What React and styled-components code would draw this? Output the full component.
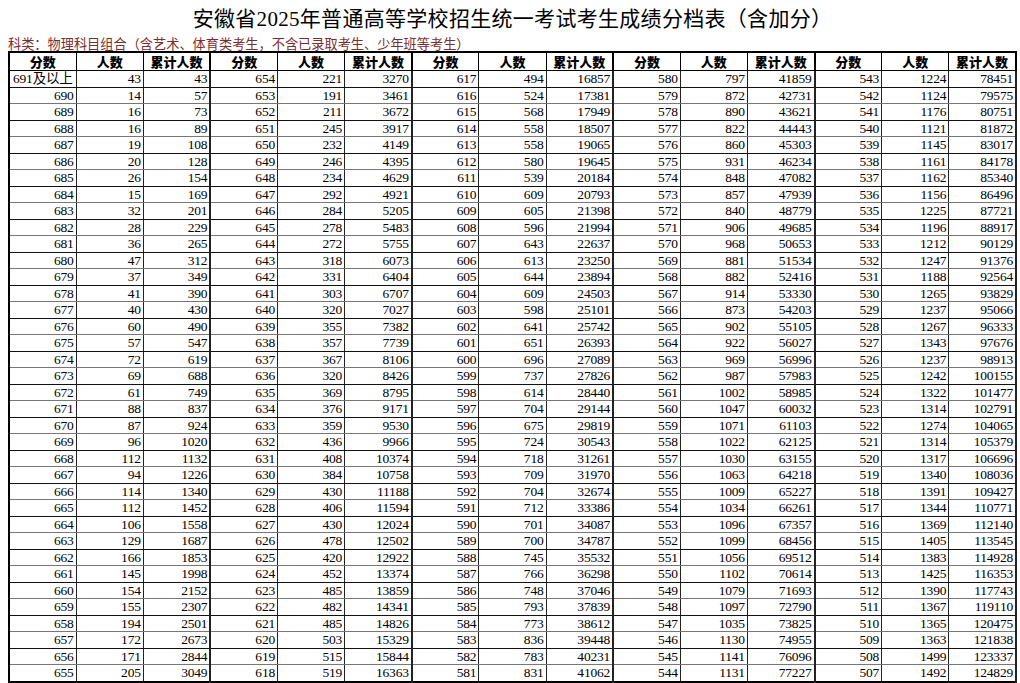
import React from "react";
import styled, { createGlobalStyle } from "styled-components";

// 分数段人数（每组37行，累计人数由人数逐行累加）
const groups = [
  { start: 691, counts: [43,14,16,16,19,20,26,15,32,28,36,47,37,41,40,60,57,72,69,61,88,87,96,112,94,114,112,106,129,166,145,154,155,194,172,171,205] },
  { start: 654, counts: [221,191,211,245,232,246,234,292,284,278,272,318,331,303,320,355,357,367,320,369,376,359,436,408,384,430,406,430,478,420,452,485,482,485,503,515,519] },
  { start: 617, counts: [494,524,568,558,558,580,539,609,605,596,643,613,644,609,598,641,651,696,737,614,704,675,724,718,709,704,712,701,700,745,766,748,793,773,836,783,831] },
  { start: 580, counts: [797,872,890,822,860,931,848,857,840,906,968,881,882,914,873,902,922,969,987,1002,1047,1071,1022,1030,1063,1009,1034,1096,1099,1056,1102,1079,1097,1035,1130,1141,1131] },
  { start: 543, counts: [1224,1124,1176,1121,1145,1161,1162,1156,1225,1196,1212,1247,1188,1265,1237,1267,1343,1237,1242,1322,1314,1274,1314,1317,1340,1391,1344,1369,1405,1383,1425,1390,1367,1365,1363,1499,1492] },
];

const buildRows = () => {
  let total = 0;
  const cols = groups.map((g) =>
    g.counts.map((c, i) => {
      total += c;
      const score = g.start - i;
      return { score: score === 691 ? "691及以上" : score, count: c, total };
    })
  );
  return cols[0].map((_, r) => cols.map((col) => col[r]));
};

const rows = buildRows();

const GlobalStyle = createGlobalStyle`
  html, body { margin: 0; padding: 0; background: #fff; }
  body { font-family: "Liberation Serif", "Noto Sans CJK SC", serif; color: #000; }
`;

const Page = styled.div`
  width: 1020px;
  height: 683px;
  overflow: hidden;
  padding: 0 3px 0 8px;
  box-sizing: border-box;
`;

const Title = styled.h1`
  margin: 0;
  padding-top: 5px;
  height: 31px;
  text-align: center;
  font-size: 21px;
  font-weight: normal;
  line-height: 28px;
  letter-spacing: 0.3px;
  font-family: "Liberation Serif", "Noto Sans CJK SC", serif;
`;

const Subtitle = styled.div`
  height: 15px;
  font-size: 13.2px;
  line-height: 16px;
  color: #7a2e2e;
  font-family: "Noto Sans CJK SC", sans-serif;
  white-space: nowrap;
`;

const Table = styled.table`
  width: 1009px;
  border-collapse: collapse;
  table-layout: fixed;
  border: 2px solid #000;
`;

const HeadCell = styled.th`
  height: 17px;
  padding: 0;
  font-size: 13px;
  font-weight: 900;
  font-family: "Noto Sans CJK SC", sans-serif;
  line-height: 17px;
  text-align: center;
  border-right: ${({ $end }) => ($end ? "2px" : "1px")} solid #000;
  border-bottom: 1px solid #000;
`;

const Cell = styled.td`
  height: 15.5px;
  padding: 0 2px 0 3px;
  font-size: 13.5px;
  line-height: 15px;
  text-align: ${({ $left }) => ($left ? "left" : "right")};
  letter-spacing: -0.2px;
  white-space: nowrap;
  overflow: hidden;
  border-right: ${({ $end }) => ($end ? "2px" : "1px")} solid #222;
  border-bottom: 1px solid ${({ $dim }) => ($dim ? "#777" : "#111")};
`;

const App = () => {
  return (
    <>
      <GlobalStyle />
      <Page>
        <Title>安徽省2025年普通高等学校招生统一考试考生成绩分档表（含加分）</Title>
        <Subtitle>科类：物理科目组合（含艺术、体育类考生，不含已录取考生、少年班等考生）</Subtitle>
        <Table>
          <thead>
            <tr>
              {groups.map((g, i) => (
                <React.Fragment key={i}>
                  <HeadCell>分数</HeadCell>
                  <HeadCell>人数</HeadCell>
                  <HeadCell $end>累计人数</HeadCell>
                </React.Fragment>
              ))}
            </tr>
          </thead>
          <tbody>
            {rows.map((row, r) => (
              <tr key={r}>
                {row.map((item, i) => (
                  <React.Fragment key={i}>
                    <Cell $left={r === 0 && i === 0} $dim={r % 2 === 1}>{item.score}</Cell>
                    <Cell $dim={r % 2 === 1}>{item.count}</Cell>
                    <Cell $end $dim={r % 2 === 1}>{item.total}</Cell>
                  </React.Fragment>
                ))}
              </tr>
            ))}
          </tbody>
        </Table>
      </Page>
    </>
  );
};

export default App;
